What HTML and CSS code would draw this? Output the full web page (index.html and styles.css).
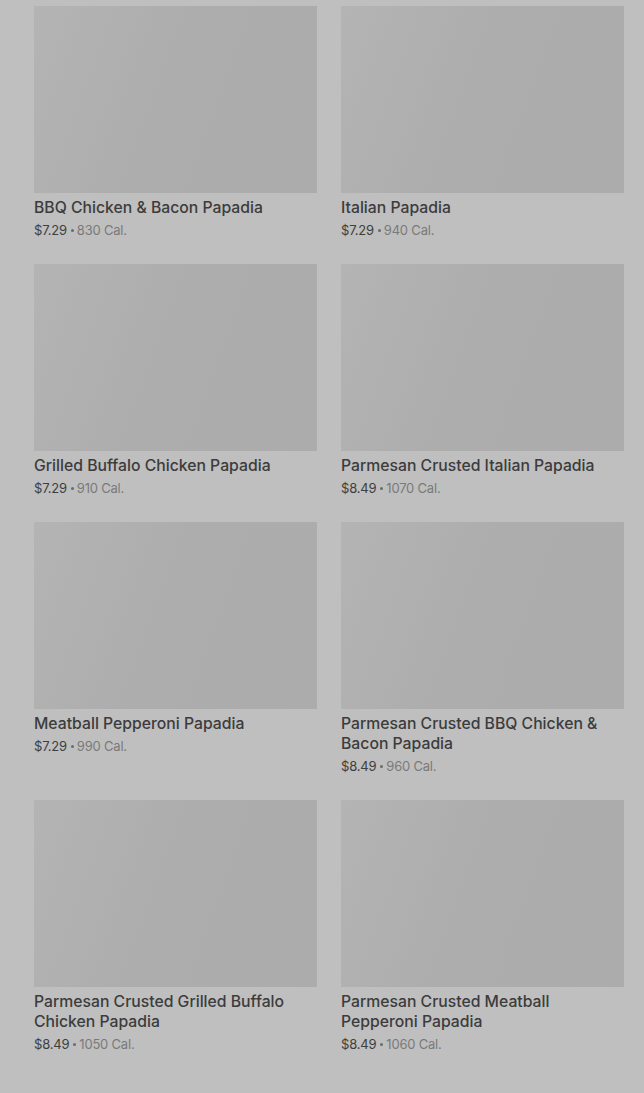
FILE: index.html
```html
<!DOCTYPE html>
<html>
<head>
<meta charset="utf-8">
<link rel="stylesheet" href="styles.css">
</head>
<body>
<main class="grid">
  <div class="card"><div class="img"></div><div class="title">BBQ Chicken &amp; Bacon Papadia</div><div class="meta"><span class="price">$7.29</span><span class="dot"></span><span class="cal">830 Cal.</span></div></div>
  <div class="card"><div class="img"></div><div class="title">Italian Papadia</div><div class="meta"><span class="price">$7.29</span><span class="dot"></span><span class="cal">940 Cal.</span></div></div>
  <div class="card"><div class="img"></div><div class="title">Grilled Buffalo Chicken Papadia</div><div class="meta"><span class="price">$7.29</span><span class="dot"></span><span class="cal">910 Cal.</span></div></div>
  <div class="card"><div class="img"></div><div class="title">Parmesan Crusted Italian Papadia</div><div class="meta"><span class="price">$8.49</span><span class="dot"></span><span class="cal">1070 Cal.</span></div></div>
  <div class="card"><div class="img"></div><div class="title">Meatball Pepperoni Papadia</div><div class="meta"><span class="price">$7.29</span><span class="dot"></span><span class="cal">990 Cal.</span></div></div>
  <div class="card"><div class="img"></div><div class="title">Parmesan Crusted BBQ Chicken &amp; Bacon Papadia</div><div class="meta"><span class="price">$8.49</span><span class="dot"></span><span class="cal">960 Cal.</span></div></div>
  <div class="card"><div class="img"></div><div class="title">Parmesan Crusted Grilled Buffalo Chicken Papadia</div><div class="meta"><span class="price">$8.49</span><span class="dot"></span><span class="cal">1050 Cal.</span></div></div>
  <div class="card"><div class="img"></div><div class="title">Parmesan Crusted Meatball Pepperoni Papadia</div><div class="meta"><span class="price">$8.49</span><span class="dot"></span><span class="cal">1060 Cal.</span></div></div>
</main>
</body>
</html>
```
FILE: styles.css
```css
html, body {
  margin: 0;
  padding: 0;
  background: #bfbfbf;
}
body {
  font-family: "Inter", "Roboto", sans-serif;
  height: 1093px;
  overflow: hidden;
}
.grid {
  display: grid;
  grid-template-columns: 283px 283px;
  column-gap: 24px;
  row-gap: 24px;
  padding: 6px 20px 0 34px;
  align-items: start;
}
.img {
  height: 187px;
  background: linear-gradient(110deg, #b4b4b4 0%, #adadad 45%, #acacac 100%);
}
.title {
  margin-top: 5px;
  font-size: 15.75px;
  line-height: 20px;
  font-weight: 500;
  color: #3c3c3c;
  padding-right: 4px;
}
.meta {
  margin-top: 2px;
  height: 20px;
  display: flex;
  align-items: center;
  font-size: 13px;
  color: #7a7a7a;
  letter-spacing: -0.2px;
}
.price {
  color: #3e3e3e;
}
.dot {
  width: 3px;
  height: 3px;
  border-radius: 50%;
  background: #6a6a6a;
  margin: 1px 3px 0 4px;
}
```
